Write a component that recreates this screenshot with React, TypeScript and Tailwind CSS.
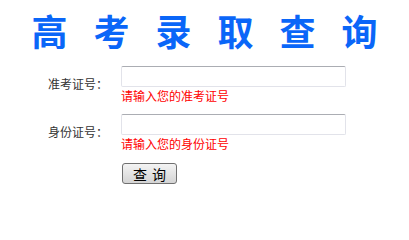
import React from 'react';

const title = ['高', '考', '录', '取', '查', '询'];

const Field: React.FC<{ label: string; hint: string; className?: string }> = ({ label, hint, className }) => (
  <div className={`flex items-center ${className ?? ''}`}>
    <label className="w-[73px] text-[12px] leading-[14px] text-[#333333]">{label}</label>
    <div className="flex flex-col">
      <input
        type="text"
        className="w-[225px] h-[21px] rounded-[2px] border border-[#e2e3ea] border-t-[#abadb3] bg-white px-1 text-[12px] outline-none"
      />
      <span className="mt-[2px] text-[12px] leading-[13px] text-[#ff0000]">{hint}</span>
    </div>
  </div>
);

export default function App() {
  return (
    <div
      className="w-[409px] h-[212px] bg-white"
      style={{ fontFamily: '"Noto Sans CJK SC", "DejaVu Sans", sans-serif' }}
    >
      <h1 className="flex justify-center gap-[26px] pt-[11px] text-[36px] leading-[38px] font-bold text-[#0a66f8]">
        {title.map((c) => (
          <span key={c}>{c}</span>
        ))}
      </h1>
      <div className="flex flex-col pl-[48px] pt-[17px]">
        <Field label="准考证号：" hint="请输入您的准考证号" />
        <Field label="身份证号：" hint="请输入您的身份证号" className="mt-[12px]" />
        <div className="mt-[13px] pl-[74px]">
          <button className="flex w-[55px] h-[21px] items-center justify-center gap-[5px] rounded-[3px] border border-[#707070] bg-gradient-to-b from-[#f4f4f4] to-[#d4d4d4] text-[14px] leading-[14px] text-black">
            <span>查</span>
            <span>询</span>
          </button>
        </div>
      </div>
    </div>
  );
}
